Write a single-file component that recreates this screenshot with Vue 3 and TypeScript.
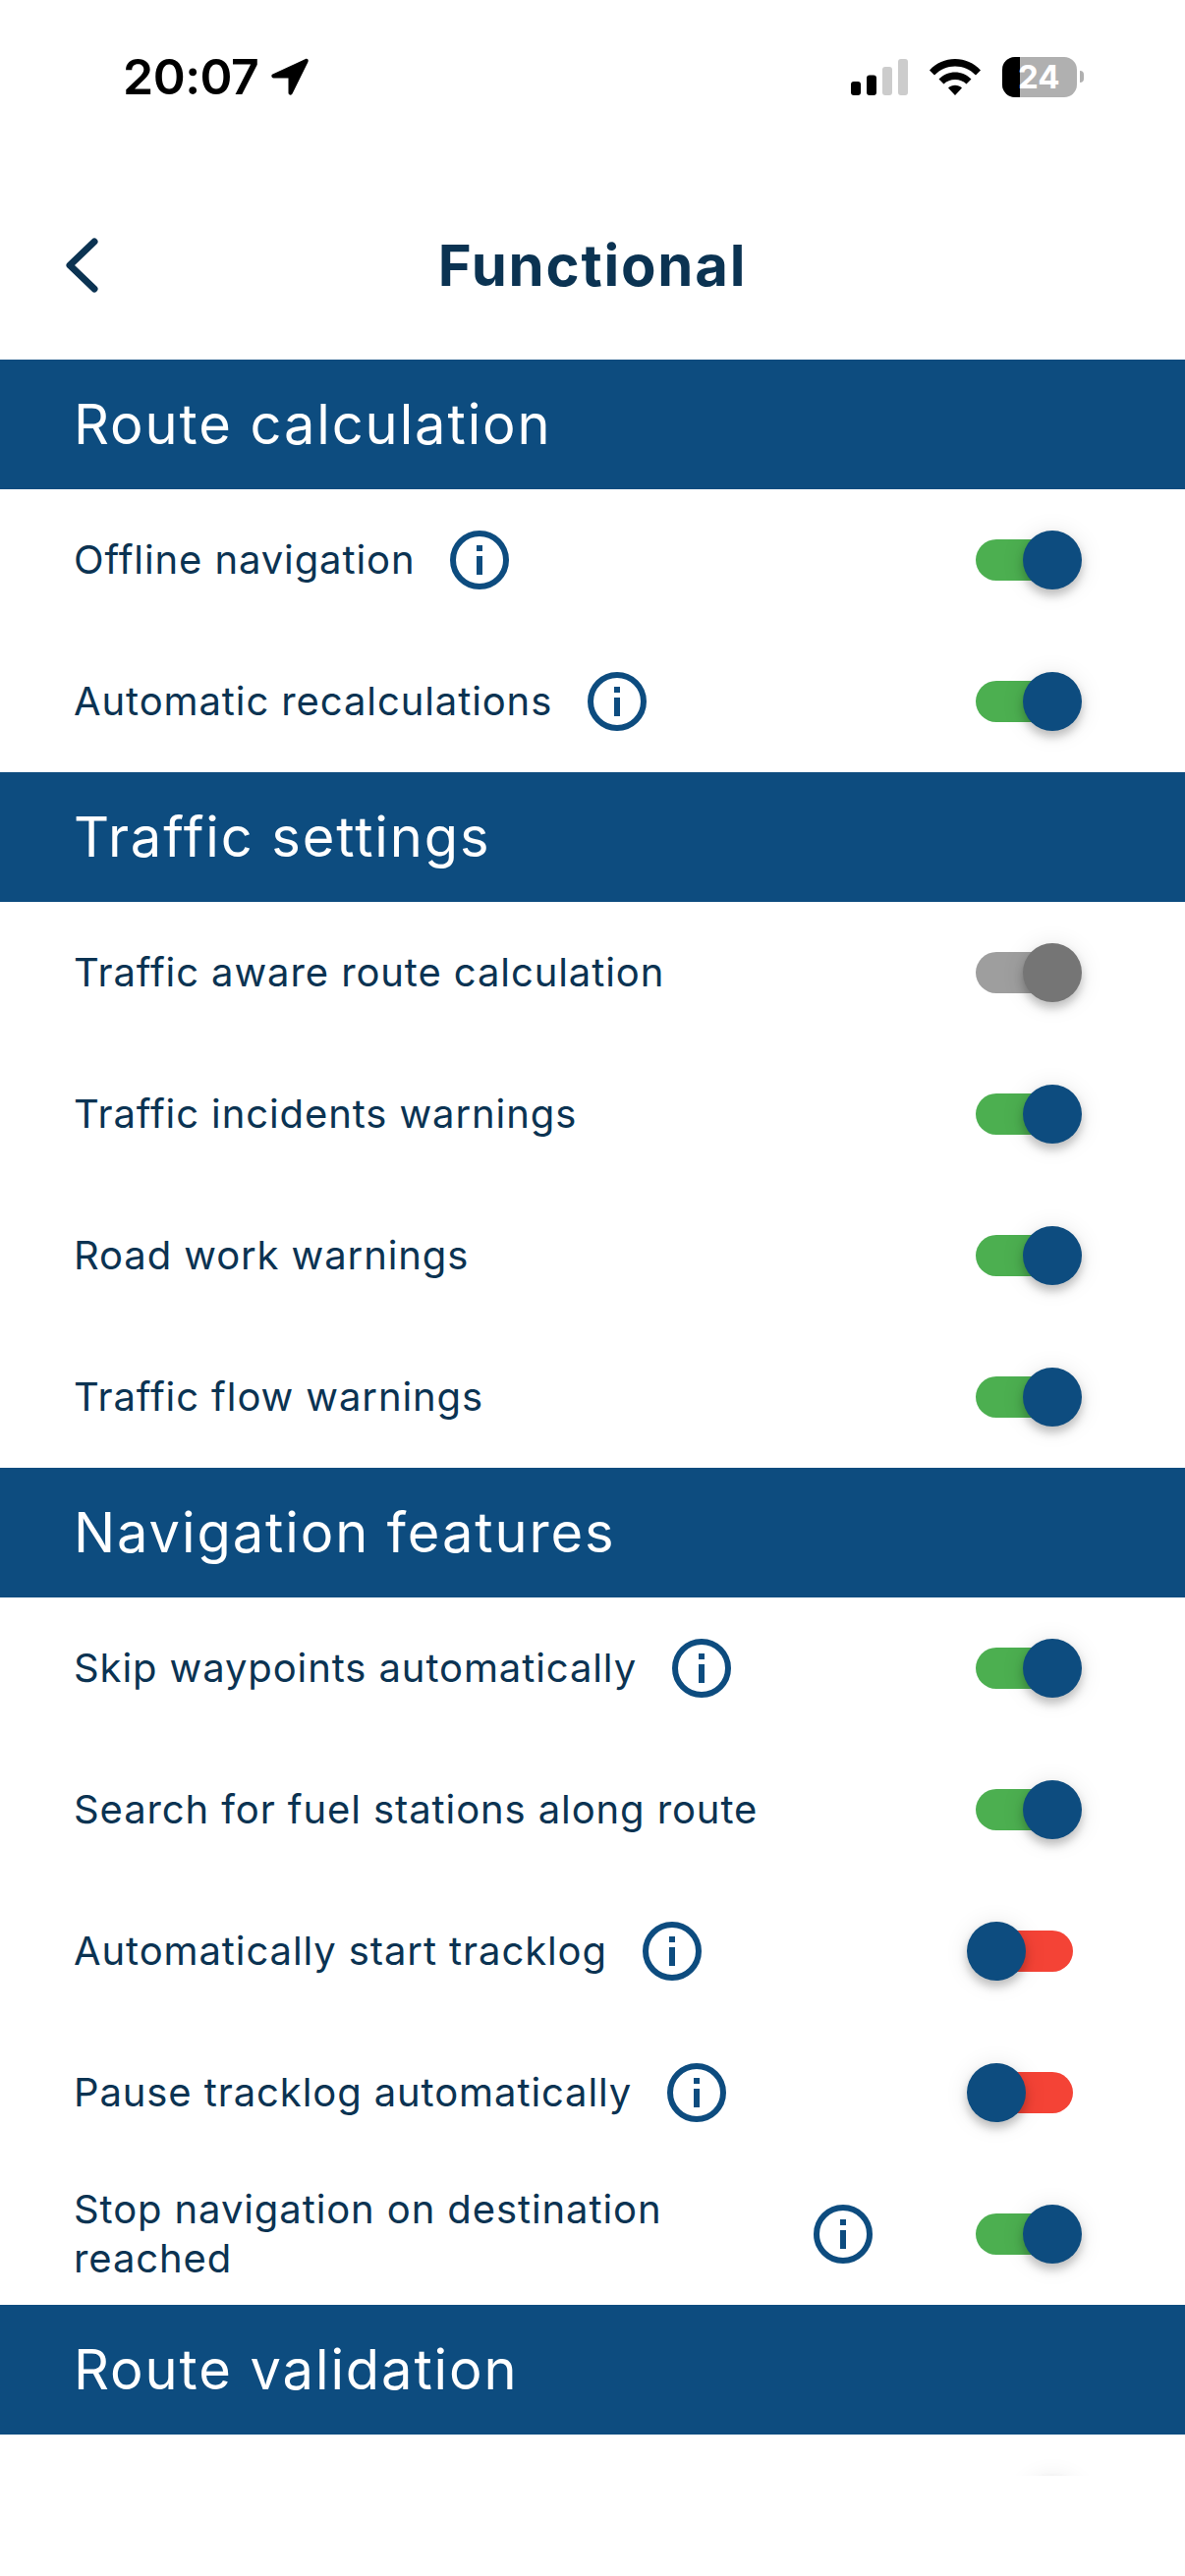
<script setup lang="ts">
type Row = { label: string; info?: boolean; state: 'on' | 'off' | 'disabled' };
type Section = { title: string; rows: Row[] };

const sections: Section[] = [
  {
    title: 'Route calculation',
    rows: [
      { label: 'Offline navigation', info: true, state: 'on' },
      { label: 'Automatic recalculations', info: true, state: 'on' },
    ],
  },
  {
    title: 'Traffic settings',
    rows: [
      { label: 'Traffic aware route calculation', state: 'disabled' },
      { label: 'Traffic incidents warnings', state: 'on' },
      { label: 'Road work warnings', state: 'on' },
      { label: 'Traffic flow warnings', state: 'on' },
    ],
  },
  {
    title: 'Navigation features',
    rows: [
      { label: 'Skip waypoints automatically', info: true, state: 'on' },
      { label: 'Search for fuel stations along route', state: 'on' },
      { label: 'Automatically start tracklog', info: true, state: 'off' },
      { label: 'Pause tracklog automatically', info: true, state: 'off' },
      { label: 'Stop navigation on destination reached', info: true, state: 'on' },
    ],
  },
  { title: 'Route validation', rows: [] },
];
</script>

<template>
  <div class="page">
    <div class="status">
      <div class="clock">
        <span class="time">20:07</span>
        <svg class="loc" width="39" height="38" viewBox="0 0 39 38">
          <path d="M36 1 2.500 16.500c-2 1-1.300 4 1 4H18.500v15c0 2.300 3.200 3 4.100.8L38.500 4c.8-2-.6-3.800-2.500-3Z" fill="#000" />
        </svg>
      </div>
      <div class="indicators">
        <svg width="58" height="37" viewBox="0 0 58 37">
          <rect x="0" y="23" width="10" height="14" rx="3" fill="#000" />
          <rect x="16" y="16.500" width="10" height="20.500" rx="3" fill="#000" />
          <rect x="32" y="8" width="10" height="29" rx="3" fill="#ccc" />
          <rect x="48" y="0" width="10" height="37" rx="3" fill="#ccc" />
        </svg>
        <svg width="52" height="37" viewBox="0 0 52 37">
          <path d="M0 11.500C7 4 16 0 26 0s19 4 26 11.500l-5 5C41 10.500 34 7.500 26 7.500S11 10.500 5 16.500Z" fill="#000" />
          <path d="M9.500 20.500C14 16 20 13.500 26 13.500s12 2.500 16.500 7l-5 5C34.500 22.500 30.500 21 26 21s-8.500 1.500-11.500 4.500Z" fill="#000" />
          <path d="M19 29.500c2-1.800 4.400-2.700 7-2.700s5 .9 7 2.700l-7 7.500Z" fill="#000" />
        </svg>
        <div class="battery">
          <div class="battery-body">
            <div class="battery-level"></div>
            <span class="battery-text">24</span>
          </div>
          <div class="battery-nub"></div>
        </div>
      </div>
    </div>

    <header class="nav">
      <svg class="back" width="33" height="56" viewBox="0 0 33 56">
        <path d="M29 4 4 28l25 24" fill="none" stroke="#0b3352" stroke-width="7" stroke-linecap="round" stroke-linejoin="round" />
      </svg>
      <h1 class="title">Functional</h1>
    </header>

    <section v-for="section in sections" :key="section.title">
      <div class="band">{{ section.title }}</div>
      <div v-for="row in section.rows" :key="row.label" class="row">
        <span class="label">{{ row.label }}</span>
        <svg v-if="row.info" class="info" width="60" height="60" viewBox="0 0 60 60">
          <circle cx="30" cy="30" r="27" fill="none" stroke="#0d4c7f" stroke-width="6" />
          <rect x="27" y="15" width="6" height="6" fill="#0d4c7f" />
          <rect x="27" y="26" width="6" height="19" fill="#0d4c7f" />
        </svg>
        <div class="toggle" :class="row.state">
          <div class="knob"></div>
        </div>
      </div>
    </section>

    <!-- next row is cut off by the bottom of the list, only the knob shadow shows -->
    <div class="peek">
      <div class="row">
        <div class="toggle on">
          <div class="knob"></div>
        </div>
      </div>
    </div>
  </div>
</template>

<style scoped>
.page {
  width: 1206px;
  height: 2622px;
  overflow: hidden;
  background: #fff;
  font-family: Inter, "Liberation Sans", sans-serif;
}
.status {
  height: 174px;
  padding: 0 103px 18px 125px;
  box-sizing: border-box;
  display: flex;
  align-items: center;
  justify-content: space-between;
}
.clock {
  display: flex;
  align-items: center;
  gap: 12px;
}
.time {
  font-size: 50px;
  line-height: 50px;
  font-weight: 600;
  letter-spacing: -0.5px;
  color: #000;
}
.indicators {
  display: flex;
  align-items: center;
  gap: 22px;
}
.battery {
  display: flex;
  align-items: center;
  gap: 3px;
}
.battery-body {
  position: relative;
  width: 76px;
  height: 41px;
  border-radius: 13px;
  overflow: hidden;
  background: #b0b0b0;
}
.battery-level {
  width: 18px;
  height: 100%;
  background: #000;
}
.battery-text {
  position: absolute;
  left: 16px;
  top: 0;
  font-size: 33px;
  line-height: 41px;
  font-weight: 700;
  color: #fff;
}
.battery-nub {
  width: 4px;
  height: 12px;
  border-radius: 0 6px 6px 0;
  background: #b0b0b0;
}
.nav {
  height: 192px;
  position: relative;
  display: flex;
  align-items: center;
  justify-content: center;
}
.back {
  position: absolute;
  left: 67px;
  top: 68px;
}
.title {
  margin: 0;
  font-size: 58px;
  font-weight: 700;
  letter-spacing: 1.8px;
  color: #0b3352;
}
.band {
  height: 132px;
  padding-left: 75px;
  display: flex;
  align-items: center;
  background: #0d4c7f;
  color: #fff;
  font-size: 56px;
  font-weight: 400;
  letter-spacing: 1.9px;
}
.row {
  height: 144px;
  padding: 0 114px 0 75px;
  display: flex;
  align-items: center;
  color: #0b3352;
}
.label {
  max-width: 717px;
  font-size: 40px;
  line-height: 50px;
  letter-spacing: 0.9px;
}
.info {
  margin-left: 36px;
  flex: none;
}
.toggle {
  position: relative;
  flex: none;
  width: 99px;
  height: 42px;
  margin-left: auto;
  border-radius: 21px;
}
.knob {
  position: absolute;
  top: -9px;
  width: 60px;
  height: 60px;
  border-radius: 50%;
  box-shadow: 0 6px 10px rgba(0, 0, 0, 0.22), 0 2px 24px rgba(0, 0, 0, 0.1);
}
.toggle.on { background: #4caf50; }
.toggle.on .knob { right: -9px; background: #0d4c7f; }
.toggle.off { background: #f44336; }
.toggle.off .knob { left: -9px; background: #0d4c7f; }
.toggle.disabled { background: #9e9e9e; }
.toggle.disabled .knob { right: -9px; background: #757575; }
.peek {
  height: 42px;
  overflow: hidden;
}
</style>

<style>
body {
  background: #fff;
}
</style>
